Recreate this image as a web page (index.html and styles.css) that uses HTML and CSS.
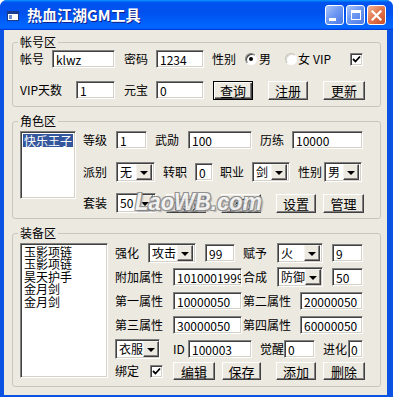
FILE: index.html
```html
<!DOCTYPE html>
<html>
<head>
  <meta charset="utf-8">
  <title>热血江湖GM工具</title>
  <link rel="stylesheet" href="styles.css">
</head>
<body>
<div class="window">

  <!-- title bar -->
  <div class="titlebar">
    <svg class="app-icon" width="12" height="10" viewBox="0 0 12 10">
      <rect x="0.5" y="0.5" width="11" height="9" fill="#fff" stroke="#1b3a8c"/>
      <rect x="1" y="1" width="10" height="2" fill="#1b3a8c"/>
      <rect x="2" y="4" width="3" height="4" fill="#6e8fd8"/>
    </svg>
    <span class="title">热血江湖GM工具</span>
    <div class="caption">
      <span class="cap cap-min"><i></i></span>
      <span class="cap cap-max"><i></i></span>
      <span class="cap cap-close">
        <svg width="11" height="11" viewBox="0 0 11 11"><path d="M1.5 1.5 L9.5 9.5 M9.5 1.5 L1.5 9.5" stroke="#fff" stroke-width="2.2" stroke-linecap="square"/></svg>
      </span>
    </div>
  </div>

  <div class="client">

    <!-- 帐号区 -->
    <fieldset class="group" id="g-acct">
      <legend>帐号区</legend>
      <div class="row">
        <span class="lbl" id="l-acct">帐号</span>
        <input class="txt" id="t-acct" value="klwz">
        <span class="lbl" id="l-pwd">密码</span>
        <input class="txt" id="t-pwd" value="1234">
        <span class="lbl" id="l-sex">性别</span>
        <span class="radio on"></span>
        <span class="lbl" id="l-male">男</span>
        <span class="radio off"></span>
        <span class="lbl" id="l-female">女</span>
        <span class="lbl" id="l-vip">VIP</span>
        <span class="check"><svg width="9" height="9" viewBox="0 0 9 9"><path d="M1 4 L3.5 6.5 L8 1.5" fill="none" stroke="#000" stroke-width="1.8"/></svg></span>
      </div>
      <div class="row" id="r-acct2">
        <span class="lbl" id="l-vipdays">VIP天数</span>
        <input class="txt" id="t-vipdays" value="1">
        <span class="lbl" id="l-gold">元宝</span>
        <input class="txt" id="t-gold" value="0">
        <button class="btn default" id="b-query">查询</button>
        <button class="btn" id="b-reg">注册</button>
        <button class="btn" id="b-upd">更新</button>
      </div>
    </fieldset>

    <!-- 角色区 -->
    <fieldset class="group" id="g-role">
      <legend>角色区</legend>
      <div class="listbox" id="lst-role">
        <div class="item sel">快乐王子</div>
      </div>
      <div class="col">
        <div class="row">
          <span class="lbl w33">等级</span>
          <input class="txt" id="t-level" value="1">
          <span class="lbl" id="l-merit">武勋</span>
          <input class="txt" id="t-merit" value="100">
          <span class="lbl" id="l-exp">历练</span>
          <input class="txt" id="t-exp" value="10000">
        </div>
        <div class="row" id="r-role2">
          <span class="lbl w33">派别</span>
          <div class="combo" id="c-sect"><span>无</span><b class="drop"></b></div>
          <span class="lbl" id="l-job2">转职</span>
          <input class="txt" id="t-job2" value="0">
          <span class="lbl" id="l-job">职业</span>
          <div class="combo" id="c-job"><span>剑</span><b class="drop"></b></div>
          <span class="lbl" id="l-sex2">性别</span>
          <div class="combo" id="c-sex2"><span>男</span><b class="drop"></b></div>
        </div>
        <div class="row" id="r-role3">
          <span class="lbl w33">套装</span>
          <div class="combo" id="c-suit"><span>50</span><b class="drop"></b></div>
          <button class="btn" id="b-read">读取</button>
          <button class="btn" id="b-mod">修改</button>
          <button class="btn" id="b-set">设置</button>
          <button class="btn" id="b-admin">管理</button>
          <span class="watermark">LaoWB.com</span>
        </div>
      </div>
    </fieldset>

    <!-- 装备区 -->
    <fieldset class="group" id="g-equip">
      <legend>装备区</legend>
      <div class="listbox" id="lst-equip">
        <div class="item">玉影项链</div>
        <div class="item">玉影项链</div>
        <div class="item">昊天护手</div>
        <div class="item">金月剑</div>
        <div class="item">金月剑</div>
      </div>
      <div class="col">
        <div class="row">
          <span class="lbl w33">强化</span>
          <div class="combo" id="c-str"><span>攻击</span><b class="drop"></b></div>
          <input class="txt" id="t-str" value="99">
          <span class="lbl l-mid">赋予</span>
          <div class="combo c-mid"><span>火</span><b class="drop"></b></div>
          <input class="txt t-end" value="9">
        </div>
        <div class="row eq-row">
          <span class="lbl w58">附加属性</span>
          <input class="txt t-attr" value="1010001999">
          <span class="lbl l-mid">合成</span>
          <div class="combo c-mid"><span>防御</span><b class="drop"></b></div>
          <input class="txt t-end" value="50">
        </div>
        <div class="row eq-row">
          <span class="lbl w58">第一属性</span>
          <input class="txt t-attr" value="10000050">
          <span class="lbl l-attr2">第二属性</span>
          <input class="txt t-attr2" value="20000050">
        </div>
        <div class="row eq-row">
          <span class="lbl w58">第三属性</span>
          <input class="txt t-attr" value="30000050">
          <span class="lbl l-attr2">第四属性</span>
          <input class="txt t-attr2" value="60000050">
        </div>
        <div class="row eq-row">
          <div class="combo" id="c-type"><span>衣服</span><b class="drop"></b></div>
          <span class="lbl" id="l-id">ID</span>
          <input class="txt" id="t-id" value="100003">
          <span class="lbl" id="l-wake">觉醒</span>
          <input class="txt" id="t-wake" value="0">
          <span class="lbl" id="l-evo">进化</span>
          <input class="txt" id="t-evo" value="0">
        </div>
        <div class="row" id="r-eq6">
          <span class="lbl" id="l-bind">绑定</span>
          <span class="check"><svg width="9" height="9" viewBox="0 0 9 9"><path d="M1 4 L3.5 6.5 L8 1.5" fill="none" stroke="#000" stroke-width="1.8"/></svg></span>
          <button class="btn" id="b-edit">编辑</button>
          <button class="btn" id="b-save">保存</button>
          <button class="btn" id="b-add">添加</button>
          <button class="btn" id="b-del">删除</button>
        </div>
      </div>
    </fieldset>

  </div>
</div>
</body>
</html>
```

FILE: styles.css
```css
* { box-sizing: border-box; }
html, body { margin: 0; padding: 0; }
body {
  width: 393px;
  height: 397px;
  overflow: hidden;
  background: #fff;
  font-family: "Noto Sans CJK SC", "Liberation Sans", sans-serif;
  font-size: 12px;
  color: #000;
}

/* window frame */
.window {
  width: 393px;
  height: 397px;
  display: flex;
  flex-direction: column;
  background: #0a52e4;
  border-radius: 7px 7px 0 0;
  overflow: hidden;
}

.titlebar {
  height: 30px;
  flex: none;
  display: flex;
  align-items: center;
  padding: 0 7px 0 7px;
  background: linear-gradient(180deg, #0997ff, #0053ee 8%, #0050ee 40%, #06f 88%, #06f 93%, #005bff 95%, #003dd7 96%, #003dd7);
}
.app-icon { flex: none; margin-top: 1px; }
.title {
  margin-left: 8px;
  color: #fff;
  font-weight: bold;
  font-size: 15px;
  line-height: 18px;
  text-shadow: 1px 1px #0f1f8a;
}
.caption { margin-left: auto; display: flex; gap: 2px; }
.cap {
  width: 19px;
  height: 20px;
  border: 1px solid #fff;
  border-radius: 3px;
  display: flex;
  align-items: center;
  justify-content: center;
  background: linear-gradient(135deg, #a9c4fa, #6f99f2 45%, #4a79e6);
}
.cap-min i { display: block; width: 7px; height: 3px; background: #fff; margin: 8px 4px 0 0; }
.cap-max i { display: block; width: 10px; height: 10px; border: 1px solid #fff; border-top-width: 3px; }
.cap-close { background: linear-gradient(135deg, #f2b497, #e27a52 45%, #cc4a22); }

/* client area */
.client {
  flex: 1;
  margin: 0 6px 4px 4px;
  background: #ece9e1;
  padding: 6px 0 0 8px;
}

.group {
  margin: 0 0 8px 0;
  padding: 0 0 0 7px;
  width: 369px;
  border: 1px solid #c9c6bb;
  border-radius: 3px;
  display: flex;
  flex-direction: column;
  align-items: flex-start;
}
.group legend {
  padding: 0 2px;
  margin-left: -2px;
  font-size: 12px;
  line-height: 12px;
}
#g-acct { height: 71px; padding-top: 1px; }
#g-role { height: 104px; padding-top: 3px; flex-direction: row; }
#g-equip { height: 160px; padding-top: 4px; flex-direction: row; }

.row {
  display: flex;
  align-items: center;
  height: 20px;
  position: relative;
}
.row > * { flex: none; }
.col { margin-left: 7px; }

.lbl { white-space: nowrap; line-height: 14px; }

/* sunken text box */
.txt {
  height: 18px;
  margin: 0;
  padding: 0 0 0 3px;
  border: 1px solid;
  border-color: #808080 #fff #fff #808080;
  box-shadow: inset 1px 1px #404040, inset -1px -1px #d4d0c8;
  background: #fff;
  font-family: "Noto Sans CJK SC", "Liberation Sans", sans-serif;
  font-size: 12px;
  color: #000;
  outline: none;
}

/* combo box */
.combo {
  height: 20px;
  display: flex;
  align-items: center;
  padding: 2px;
  border: 1px solid;
  border-color: #808080 #fff #fff #808080;
  box-shadow: inset 1px 1px #404040, inset -1px -1px #d4d0c8;
  background: #fff;
}
.combo span {
  flex: 1;
  white-space: nowrap;
  padding-left: 1px;
  font-size: 12px;
  line-height: 16px;
}
.drop {
  flex: none;
  width: 16px;
  height: 16px;
  display: flex;
  align-items: center;
  justify-content: center;
  background: #ece9e1;
  border: 1px solid;
  border-color: #f4f3ee #404040 #404040 #f4f3ee;
  box-shadow: inset -1px -1px #808080;
}
.drop::after {
  content: "";
  border-left: 4px solid transparent;
  border-right: 4px solid transparent;
  border-top: 4px solid #000;
  margin-top: 1px;
}

/* raised button */
.btn {
  height: 19px;
  margin: 0;
  padding: 0;
  background: #ece9e1;
  border: 1px solid;
  border-color: #fff #404040 #404040 #fff;
  box-shadow: inset -1px -1px #808080;
  font-family: "Noto Sans CJK SC", sans-serif;
  font-size: 13px;
  line-height: 15px;
  color: #000;
}
.btn.default {
  border-color: #000;
  box-shadow: inset 1px 1px #fff, inset -1px -1px #404040, inset -2px -2px #808080;
}

/* radio and check */
.radio {
  width: 12px;
  height: 12px;
  border-radius: 50%;
  background: #fff;
  border: 1px solid;
  border-color: #808080 #fff #fff #808080;
  box-shadow: inset 1px 1px #404040;
  display: flex;
  align-items: center;
  justify-content: center;
}
.radio.on::after { content: ""; width: 4px; height: 4px; border-radius: 50%; background: #000; }
.radio.off { border-color: #c4c2bb #fff #fff #c4c2bb; box-shadow: inset 1px 1px #dcdad4; }
.check {
  width: 13px;
  height: 13px;
  background: #fff;
  border: 1px solid;
  border-color: #808080 #fff #fff #808080;
  box-shadow: inset 1px 1px #404040, inset -1px -1px #d4d0c8;
  display: flex;
  align-items: center;
  justify-content: center;
}

/* list box */
.listbox {
  flex: none;
  background: #fff;
  padding: 2px 2px;
  border: 1px solid;
  border-color: #808080 #fff #fff #808080;
  box-shadow: inset 1px 1px #404040, inset -1px -1px #d4d0c8;
}
.item { line-height: 12.4px; height: 12.4px; padding-left: 1px; white-space: nowrap; }
.item.sel { background: #34569c; color: #fff; height: 13px; line-height: 13px; }
#lst-role { width: 56px; height: 68px; margin-top: 1px; }
#lst-equip { width: 88px; height: 135px; }

/* 帐号区 */
#l-acct { width: 32px; }
#t-acct { width: 63px; }
#l-pwd { margin-left: 9px; width: 32px; }
#t-pwd { width: 48px; }
#l-sex { margin-left: 8px; width: 33px; }
#l-male { margin-left: 2px; width: 26px; }
#l-female { width: 12px; margin-left: 1px; }
#l-vip { margin-left: 3px; width: 37px; }
#r-acct2 { margin-top: 11px; }
#l-vipdays { width: 56px; }
#t-vipdays { width: 39px; }
#l-gold { margin-left: 9px; width: 32px; }
#t-gold { width: 48px; }
#b-query { margin-left: 9px; width: 40px; }
#b-reg { margin-left: 15px; width: 40px; }
#b-upd { margin-left: 15px; width: 42px; }

/* 角色区 */
.w33 { width: 33px; }
.w58 { width: 58px; }
#t-level { width: 31px; }
#l-merit { margin-left: 8px; width: 33px; }
#t-merit { width: 64px; }
#l-exp { margin-left: 8px; width: 32px; }
#t-exp { width: 71px; }
#r-role2 { margin-top: 12px; }
#c-sect { width: 39px; }
#l-job2 { margin-left: 8px; width: 32px; }
#t-job2 { width: 18px; }
#l-job { margin-left: 7px; width: 32px; }
#c-job { width: 38px; }
#l-sex2 { margin-left: 8px; width: 26px; }
#c-sex2 { width: 38px; }
#r-role3 { margin-top: 11px; }
#c-suit { width: 40px; }
#b-read { margin-left: 10px; width: 40px; }
#b-mod { margin-left: 15px; width: 40px; }
#b-set { margin-left: 15px; width: 40px; }
#b-admin { margin-left: 7px; width: 41px; }

.watermark {
  position: absolute;
  left: 52px;
  top: -3px;
  font-family: "Liberation Sans", sans-serif;
  font-weight: bold;
  font-style: italic;
  font-size: 22px;
  line-height: 24px;
  color: #f3f3f3;
  opacity: 0.92;
  transform: scaleY(1.1);
  text-shadow: -1px -1px 0 #8a8a8a, 1px -1px 0 #8a8a8a, -1px 1px 0 #8a8a8a, 1px 1px 0 #8a8a8a, 2px 2px 1px #b0b0b0;
}

/* 装备区 */
.eq-row { margin-top: 4px; }
#c-str { width: 48px; }
#t-str { margin-left: 9px; width: 30px; }
.l-mid { margin-left: 8px; width: 34px; }
.c-mid { width: 46px; }
.t-end { margin-left: 9px; width: 31px; }
.t-attr { width: 69px; }
.eq-row .l-mid { margin-left: 1px; }
.l-attr2 { margin-left: 1px; width: 57px; }
.t-attr2 { width: 63px; }
#c-type { width: 45px; }
#l-id { margin-left: 13px; width: 15px; }
#t-id { width: 64px; }
#l-wake { margin-left: 8px; width: 24px; }
#t-wake { width: 31px; }
#l-evo { margin-left: 8px; width: 25px; }
#t-evo { width: 15px; padding-left: 2px; }
#r-eq6 { margin-top: 2px; }
#l-bind { width: 35px; }
#b-edit { margin-left: 10px; width: 42px; height: 18px; }
#b-save { margin-left: 7px; width: 39px; height: 18px; }
#b-add { margin-left: 15px; width: 40px; height: 18px; }
#b-del { margin-left: 7px; width: 42px; height: 18px; }
```
